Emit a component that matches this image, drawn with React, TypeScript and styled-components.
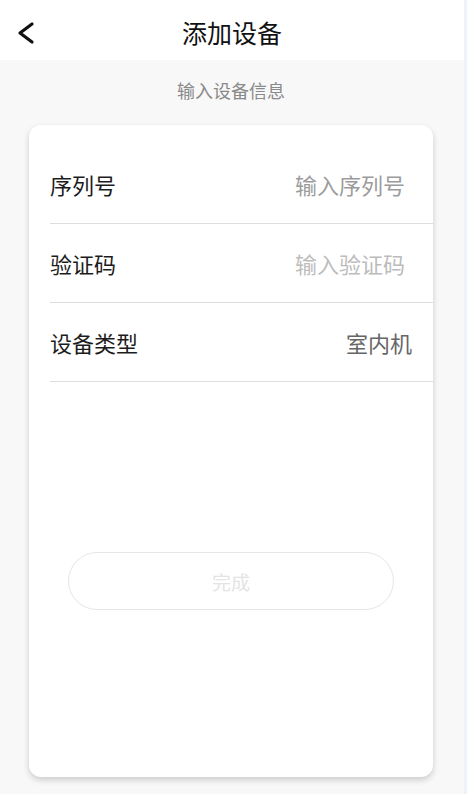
import styled, { createGlobalStyle } from 'styled-components';

const GlobalStyle = createGlobalStyle`
  html, body {
    margin: 0;
    padding: 0;
    background: #eef2f9;
  }
  body {
    font-family: "Noto Sans CJK SC", "Noto Sans", sans-serif;
  }
`;

type Field = {
  label: string;
  value: string;
  tone: 'strong' | 'soft' | 'value';
};

const fields: Field[] = [
  { label: '序列号', value: '输入序列号', tone: 'strong' },
  { label: '验证码', value: '输入验证码', tone: 'soft' },
  { label: '设备类型', value: '室内机', tone: 'value' },
];

const toneColors = {
  strong: '#9b9b9b',
  soft: '#bcbcbc',
  value: '#666666',
};

export default function App() {
  return (
    <>
      <GlobalStyle />
      <Page>
        <Header>
          <BackButton aria-label="返回">
            <svg width="20" height="24" viewBox="0 0 20 24" fill="none">
              <path
                d="M16 3 L4 12 L16 21"
                stroke="#111"
                strokeWidth="3.2"
                strokeLinecap="round"
                strokeLinejoin="round"
              />
            </svg>
          </BackButton>
          <Title>添加设备</Title>
        </Header>
        <Body>
          <Subtitle>输入设备信息</Subtitle>
          <Card>
            <List>
              {fields.map((field) => (
                <Row key={field.label}>
                  <Label>{field.label}</Label>
                  <Value $tone={field.tone}>{field.value}</Value>
                </Row>
              ))}
            </List>
            <DoneButton disabled>完成</DoneButton>
          </Card>
        </Body>
      </Page>
    </>
  );
}

const Page = styled.div`
  width: 464px;
  min-height: 794px;
  background: #f8f8f8;
  display: flex;
  flex-direction: column;
`;

const Header = styled.header`
  position: relative;
  height: 60px;
  background: #ffffff;
  display: flex;
  align-items: center;
  justify-content: center;
`;

const BackButton = styled.button`
  position: absolute;
  left: 16px;
  top: 21px;
  padding: 0;
  border: none;
  background: none;
  display: flex;
`;

const Title = styled.h1`
  margin: 0;
  font-size: 25px;
  font-weight: 400;
  color: #111111;
  line-height: 1;
  padding-top: 4px;
`;

const Body = styled.main`
  display: flex;
  flex-direction: column;
  align-items: center;
  padding: 0 31px 17px 29px;
`;

const Subtitle = styled.p`
  margin: 0;
  padding: 19px 0 0;
  height: 46px;
  box-sizing: border-box;
  font-size: 18px;
  line-height: 22px;
  color: #8a8a8a;
`;

const Card = styled.section`
  align-self: stretch;
  height: 652px;
  margin-top: 19px;
  background: #ffffff;
  border-radius: 12px;
  box-shadow: 0 3px 6px rgba(0, 0, 0, 0.18);
  display: flex;
  flex-direction: column;
  align-items: center;
  padding-top: 20px;
  box-sizing: border-box;
`;

const List = styled.ul`
  list-style: none;
  margin: 0;
  padding: 0 0 0 21px;
  align-self: stretch;
`;

const Row = styled.li`
  height: 78px;
  border-bottom: 1.5px solid #dedede;
  display: flex;
  align-items: center;
  justify-content: space-between;
  padding-right: 28px;
`;

const Label = styled.span`
  font-size: 22px;
  color: #1c1c1c;
`;

const Value = styled.span<{ $tone: Field['tone'] }>`
  font-size: 22px;
  color: ${(p) => toneColors[p.$tone]};
  margin-right: ${(p) => (p.$tone === 'value' ? '-7px' : '0')};
`;

const DoneButton = styled.button`
  margin-top: 170px;
  width: 326px;
  height: 58px;
  border-radius: 29px;
  border: 1px solid #e6e6e6;
  background: #ffffff;
  color: #e4e4e4;
  font-family: inherit;
  font-size: 19px;
`;
